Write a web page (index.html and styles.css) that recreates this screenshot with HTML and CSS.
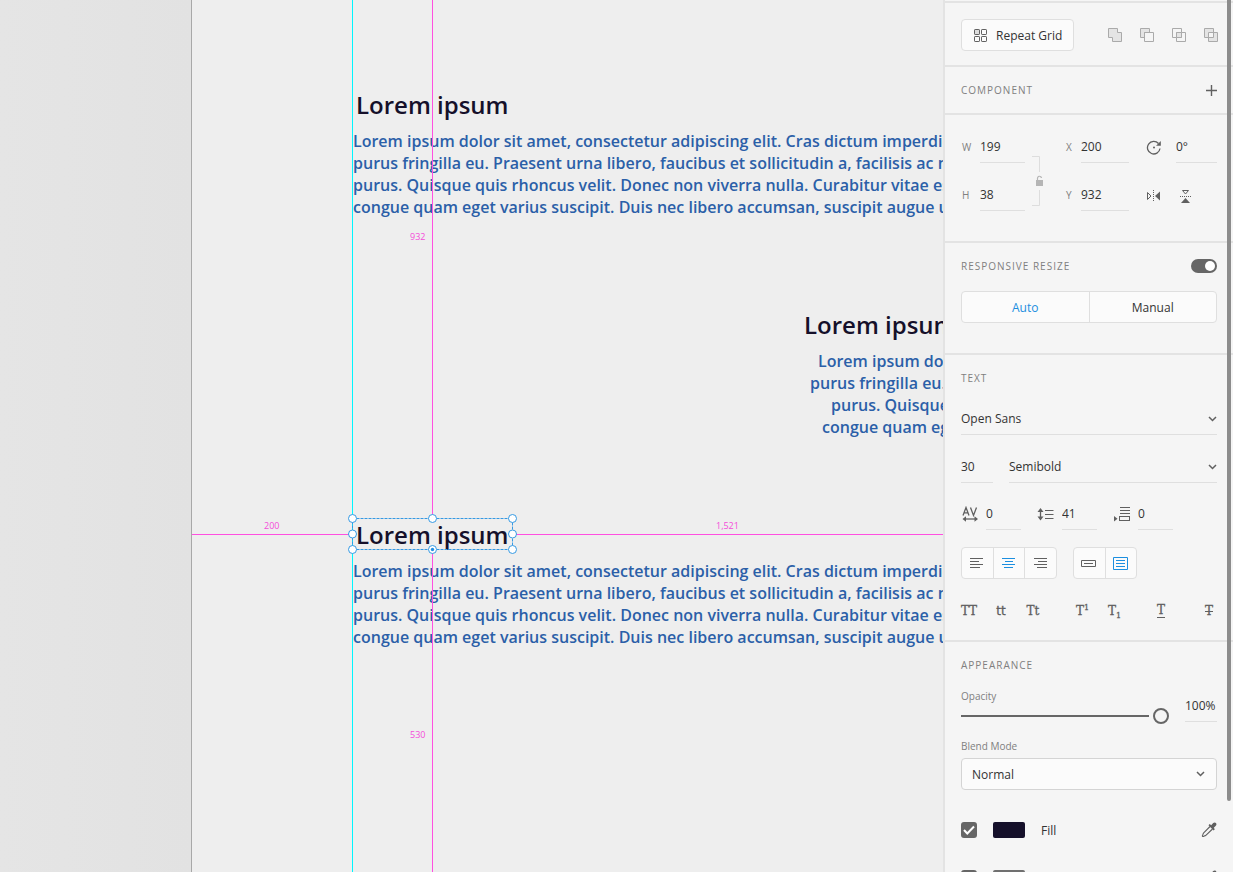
FILE: index.html
```html
<!DOCTYPE html>
<html lang="en">
<head>
<meta charset="utf-8">
<title>Design editor</title>
<link rel="stylesheet" href="styles.css">
</head>
<body class="app">
<main class="canvas">
  <div class="pasteboard"></div>
  <div class="artboard">
    <section class="copy copy-top">
      <h2 class="copy-title">Lorem ipsum</h2>
      <p class="copy-text">Lorem ipsum dolor sit amet, consectetur adipiscing elit. Cras dictum imperdiet<br>purus fringilla eu. Praesent urna libero, faucibus et sollicitudin a, facilisis ac nisi<br>purus. Quisque quis rhoncus velit. Donec non viverra nulla. Curabitur vitae est<br>congue quam eget varius suscipit. Duis nec libero accumsan, suscipit augue ut</p>
    </section>
    <section class="copy copy-middle">
      <h2 class="copy-title">Lorem ipsum</h2>
      <p class="copy-text"><span class="line line-1">Lorem ipsum dolor sit amet</span><span class="line">purus fringilla eu. Praesent urna</span><span class="line line-3">purus. Quisque quis rhoncus</span><span class="line line-4">congue quam eget varius</span></p>
    </section>
    <section class="copy copy-bottom">
      <h2 class="copy-title">Lorem ipsum</h2>
      <p class="copy-text">Lorem ipsum dolor sit amet, consectetur adipiscing elit. Cras dictum imperdiet<br>purus fringilla eu. Praesent urna libero, faucibus et sollicitudin a, facilisis ac nisi<br>purus. Quisque quis rhoncus velit. Donec non viverra nulla. Curabitur vitae est<br>congue quam eget varius suscipit. Duis nec libero accumsan, suscipit augue ut</p>
    </section>
    <div class="guide"></div>
    <div class="measure measure-up"></div>
    <div class="measure measure-down"></div>
    <div class="measure measure-left"></div>
    <div class="measure measure-right"></div>
    <span class="distance distance-up">932</span>
    <span class="distance distance-down">530</span>
    <span class="distance distance-left">200</span>
    <span class="distance distance-right">1,521</span>
    <svg class="selection" width="170" height="42" viewBox="0 0 170 42" aria-hidden="true">
      <rect class="selection-box" x="5.500" y="5.500" width="160" height="31"/>
      <g class="handle">
        <circle cx="5.500" cy="5.500" r="4"/><circle cx="85.500" cy="5.500" r="4"/><circle cx="165.500" cy="5.500" r="4"/>
        <circle cx="5.500" cy="21" r="4"/><circle cx="165.500" cy="21" r="4"/>
        <circle cx="5.500" cy="36.500" r="4"/><circle cx="85.500" cy="36.500" r="4"/><circle cx="165.500" cy="36.500" r="4"/>
      </g>
      <circle class="handle-dot" cx="85.500" cy="36.500" r="1.700"/>
    </svg>
  </div>
</main>

<aside class="panel">
  <div class="panel-top"></div>
  <section class="section toolbar">
    <button class="button repeat" type="button">
      <svg width="13" height="13" viewBox="0 0 13 13" aria-hidden="true"><g class="stroke"><rect x=".5" y=".5" width="5" height="5" rx=".6"/><rect x="7.500" y=".5" width="5" height="5" rx=".6"/><rect x=".5" y="7.500" width="5" height="5" rx=".6"/><rect x="7.500" y="7.500" width="5" height="5" rx=".6"/></g><path d="M1 1h4v4H1z" fill="#ddd"/></svg>
      Repeat Grid
    </button>
    <div class="booleans">
      <button class="icon-button" type="button" aria-label="Add"><svg width="14" height="14" viewBox="0 0 14 14"><path class="bool shade" d="M.5.5h9v4h4v9h-9v-4h-4z"/></svg></button>
      <button class="icon-button" type="button" aria-label="Subtract"><svg width="14" height="14" viewBox="0 0 14 14"><path class="bool shade" d="M.5.5h9v4h-5v5h-4z"/><path class="bool" d="M4.500 4.500h9v9h-9z"/></svg></button>
      <button class="icon-button" type="button" aria-label="Intersect"><svg width="14" height="14" viewBox="0 0 14 14"><path class="bool" d="M.5.5h9v9h-9zM4.500 4.500h9v9h-9z"/><path class="bool shade" d="M4.500 4.500h5v5h-5z"/></svg></button>
      <button class="icon-button" type="button" aria-label="Exclude overlap"><svg width="14" height="14" viewBox="0 0 14 14"><path class="bool shade" fill-rule="evenodd" d="M.5.5h9v9h-9zM4.500 4.500h9v9h-9z"/></svg></button>
    </div>
  </section>

  <section class="section section-line">
    <h3 class="caption">Component</h3>
    <button class="icon-button" type="button" aria-label="Add component"><svg width="11" height="11" viewBox="0 0 11 11"><path class="stroke" stroke-width="1.400" d="M5.500 0v11M0 5.500h11"/></svg></button>
  </section>

  <section class="section transform">
    <div class="pair">
      <label class="field"><span class="field-label">W</span><input class="input" value="199"></label>
      <label class="field"><span class="field-label">H</span><input class="input" value="38"></label>
    </div>
    <button class="icon-button link" type="button" aria-label="Lock aspect ratio"><svg width="12" height="50" viewBox="0 0 12 50"><path d="M0 .5h7.500V16M7.500 34v15.500H0" fill="none" stroke="#ddd"/><path d="M4 24h7v6H4z" fill="#b5b5b5"/><path d="M5.500 24v-1.500a2 2 0 0 1 4-.5" fill="none" stroke="#b5b5b5" stroke-width="1.200"/></svg></button>
    <div class="pair">
      <label class="field"><span class="field-label">X</span><input class="input" value="200"></label>
      <label class="field"><span class="field-label">Y</span><input class="input" value="932"></label>
    </div>
    <div class="pair rotate-column">
      <label class="field field-rotate"><svg width="16" height="16" viewBox="0 0 16 16" role="img" aria-label="Rotation"><path class="stroke" stroke-width="1.300" d="M15 9.500A6.300 6.300 0 1 1 13.500 4.500"/><path class="solid" d="M15.800 2v4.700h-4.700z"/><circle class="solid" cx="9" cy="8.500" r="1"/></svg><input class="input" value="0°"></label>
      <div class="flips">
        <button class="icon-button" type="button" aria-label="Flip horizontally"><svg width="16" height="16" viewBox="0 0 16 16"><path class="stroke" d="M2.500 5.500v7L6 9z"/><path class="solid" d="M15 4.500v9L10 9z"/><path class="stroke" stroke-dasharray="1 1" d="M8.500 3v12"/></svg></button>
        <button class="icon-button" type="button" aria-label="Flip vertically"><svg width="16" height="16" viewBox="0 0 16 16"><path class="stroke" d="M5.500 3.500h6L8.500 7z"/><path class="solid" d="M4 16h9l-4.500-5z"/><path class="stroke" stroke-dasharray="1 1" d="M3 9.500h12"/></svg></button>
      </div>
    </div>
  </section>

  <section class="section">
    <div class="heading-row">
      <h3 class="caption" id="resize-title">Responsive Resize</h3>
      <input class="toggle" type="checkbox" checked aria-labelledby="resize-title">
    </div>
    <div class="segments resize-mode">
      <button class="segment active" type="button">Auto</button>
      <button class="segment" type="button">Manual</button>
    </div>
  </section>

  <section class="section text-section">
    <h3 class="caption">Text</h3>
    <div class="select-wrap font-family">
      <select class="input select" aria-label="Font family"><option>Open Sans</option></select>
      <svg class="chevron" width="9" height="6" viewBox="0 0 9 6" aria-hidden="true"><path d="M1 1l3.500 3.500L8 1"/></svg>
    </div>
    <div class="font-row">
      <input class="input" value="30" aria-label="Font size">
      <div class="select-wrap">
        <select class="input select" aria-label="Font weight"><option>Semibold</option></select>
        <svg class="chevron" width="9" height="6" viewBox="0 0 9 6" aria-hidden="true"><path d="M1 1l3.500 3.500L8 1"/></svg>
      </div>
    </div>
    <div class="spacing-row">
      <label class="spacing"><svg width="18" height="16" viewBox="0 0 18 16" role="img" aria-label="Character spacing"><path class="stroke" stroke-width="1.300" d="M2 9.500l3-8 3 8M3.200 6.800h3.800M9.500 1.500l3 8 3-8"/><path class="stroke" stroke-width="1.300" d="M3 13h13"/><path class="solid" d="M5 10.300v5.400L1.500 13zM13.500 10.300v5.400l3.500-2.700z"/></svg><input class="input" value="0"></label>
      <label class="spacing"><svg width="18" height="16" viewBox="0 0 18 16" role="img" aria-label="Line spacing"><path class="stroke" stroke-width="1.300" d="M3.500 4v9"/><path class="solid" d="M.5 6l3-4 3 4zM.5 10.500h6l-3 4z"/><path class="stroke" d="M8 4.500h8.500M8 8.500h8.500M8 12.500h8.500"/></svg><input class="input" value="41"></label>
      <label class="spacing"><svg width="18" height="16" viewBox="0 0 18 16" role="img" aria-label="Paragraph spacing"><path class="stroke" d="M7 1.500h10M7 4.500h10M7 7.500h10"/><rect class="stroke" x="6.500" y="10.500" width="10" height="4"/><path class="solid" d="M1 10v5.500l3.500-2.700z"/></svg><input class="input" value="0"></label>
    </div>
    <div class="align-row">
      <div class="segments three">
        <button class="segment" type="button" aria-label="Align left"><svg width="14" height="14" viewBox="0 0 14 14"><path d="M0 1.500h13M0 4.500h9M0 7.500h13M0 10.500h10"/></svg></button>
        <button class="segment active" type="button" aria-label="Align center"><svg width="14" height="14" viewBox="0 0 14 14"><path d="M0 1.500h13M3 4.500h8M0 7.500h13M2 10.500h9"/></svg></button>
        <button class="segment" type="button" aria-label="Align right"><svg width="14" height="14" viewBox="0 0 14 14"><path d="M0 1.500h13M4 4.500h9M0 7.500h13M3 10.500h10"/></svg></button>
      </div>
      <div class="segments two">
        <button class="segment" type="button" aria-label="Point text"><svg width="16" height="16" viewBox="0 0 16 16"><path d="M.5 4.500h14v6H.5zM3 7.500h9"/></svg></button>
        <button class="segment active" type="button" aria-label="Area text"><svg width="16" height="16" viewBox="0 0 16 16"><path d="M.5 1.500h14v12H.5zM3 4.500h9M3 7.500h9M3 10.500h9"/></svg></button>
      </div>
    </div>
    <div class="style-row">
      <div class="style-group">
        <button class="glyph" type="button" aria-label="Uppercase">TT</button>
        <button class="glyph glyph-lower" type="button" aria-label="Lowercase">tt</button>
        <button class="glyph" type="button" aria-label="Title case">Tt</button>
      </div>
      <div class="style-group">
        <button class="glyph glyph-script" type="button" aria-label="Superscript">T<span class="script sup">1</span></button>
        <button class="glyph glyph-script" type="button" aria-label="Subscript">T<span class="script sub">1</span></button>
      </div>
      <button class="glyph" type="button" aria-label="Underline"><span class="underlined">T</span></button>
      <button class="glyph" type="button" aria-label="Strikethrough"><span class="struck">T</span></button>
    </div>
  </section>

  <section class="section appearance">
    <h3 class="caption">Appearance</h3>
    <div class="opacity-row">
      <div class="stack">
        <label class="small-label" for="opacity">Opacity</label>
        <input class="slider" id="opacity" type="range" min="0" max="100" value="100">
      </div>
      <input class="input" value="100%" aria-label="Opacity value">
    </div>
    <div class="stack blend">
      <label class="small-label" for="blend">Blend Mode</label>
      <div class="select-wrap">
        <select class="select boxed" id="blend"><option>Normal</option></select>
        <svg class="chevron chevron-inset" width="9" height="6" viewBox="0 0 9 6" aria-hidden="true"><path d="M1 1l3.500 3.500L8 1"/></svg>
      </div>
    </div>
    <div class="paint">
      <span class="check-wrap"><input class="check" id="fill" type="checkbox" checked><svg class="tick" width="12" height="10" viewBox="0 0 12 10" aria-hidden="true"><path d="M1 5l3.300 3.500L11 1.500"/></svg></span>
      <button class="swatch swatch-fill" type="button" aria-label="Fill color"></button>
      <label class="paint-label" for="fill">Fill</label>
      <button class="icon-button" type="button" aria-label="Pick fill color"><svg width="16" height="16" viewBox="0 0 16 16"><path class="stroke" stroke-width="1.100" d="M9 4.500L2.700 10.800c-.7.7-.6 1.300-.9 2-.3.600-.8 1-.3 1.500s1 .1 1.600-.2c.7-.3 1.300-.2 2-.9L11.500 7"/><path class="solid" d="M7.500 3.300l1.200-1.200 1.500 1.200 2-2.200c2-1.800 4.400.6 2.600 2.600l-2 2 1 1.600-1.200 1.200z"/></svg></button>
    </div>
    <div class="paint">
      <span class="check-wrap"><input class="check" id="border" type="checkbox" checked><svg class="tick" width="12" height="10" viewBox="0 0 12 10" aria-hidden="true"><path d="M1 5l3.300 3.500L11 1.500"/></svg></span>
      <button class="swatch swatch-border" type="button" aria-label="Border color"></button>
      <label class="paint-label" for="border">Border</label>
      <button class="icon-button" type="button" aria-label="Pick border color"><svg width="16" height="16" viewBox="0 0 16 16"><path class="stroke" stroke-width="1.100" d="M9 4.500L2.700 10.800c-.7.7-.6 1.300-.9 2-.3.600-.8 1-.3 1.500s1 .1 1.600-.2c.7-.3 1.300-.2 2-.9L11.500 7"/><path class="solid" d="M7.500 3.300l1.200-1.200 1.500 1.200 2-2.200c2-1.800 4.400.6 2.600 2.600l-2 2 1 1.600-1.200 1.200z"/></svg></button>
    </div>
  </section>
  <div class="scrollbar"></div>
</aside>
</body>
</html>
```

FILE: styles.css
```css
* { box-sizing: border-box; }

.app {
  margin: 0;
  height: 100vh;
  display: flex;
  overflow: hidden;
  background: #eee;
  color: #333;
  font: 12px/16px "Open Sans", "Noto Sans", sans-serif;
}

button, input, select { font: inherit; color: inherit; margin: 0; }
button { padding: 0; border: 0; background: none; }
svg { display: block; flex: none; }
h2, h3, p { margin: 0; }

/* Canvas */
.canvas { flex: 1; min-width: 0; display: flex; }
.pasteboard {
  width: 191px;
  background: linear-gradient(90deg, #e5e5e5, #e2e2e2);
}
.artboard {
  position: relative;
  flex: 1;
  min-width: 0;
  overflow: hidden;
  border-left: 1px solid #a8a8a8;
  background: #eee;
}
.copy { position: absolute; white-space: nowrap; font-family: "Open Sans", sans-serif; }
.copy-top { left: 161px; top: 89px; }
.copy-middle { left: 609px; top: 309px; }
.copy-bottom { left: 161px; top: 519px; }
.copy-title {
  padding-left: 3px;
  color: #15102a;
  font-size: 24px;
  line-height: 32px;
  font-weight: 600;
}
.copy-text {
  padding-top: 9px;
  color: #2b5fa8;
  font-size: 16px;
  line-height: 22px;
  font-weight: 600;
}
.copy-middle .copy-text { padding-left: 9px; }
.line { display: block; }
.line-1 { padding-left: 8px; }
.line-3 { padding-left: 21px; }
.line-4 { padding-left: 12px; }

.guide { position: absolute; left: 160px; top: 0; bottom: 0; width: 1px; background: #00f6ff; }
.measure { position: absolute; background: #ff4fe0; }
.measure-up { left: 240px; top: 0; width: 1px; height: 518px; }
.measure-down { left: 240px; top: 550px; width: 1px; bottom: 0; }
.measure-left { left: 0; top: 534px; width: 160px; height: 1px; }
.measure-right { left: 321px; top: 534px; right: 0; height: 1px; }
.distance {
  position: absolute;
  color: #f54cda;
  font-size: 9px;
  line-height: 12px;
}
.distance-up { left: 218px; top: 231px; }
.distance-down { left: 218px; top: 729px; }
.distance-left { left: 72px; top: 520px; }
.distance-right { left: 524px; top: 520px; }
.selection { position: absolute; left: 155px; top: 513px; }
.selection-box { fill: none; stroke: #3599e3; stroke-dasharray: 3 1; }
.handle { fill: #fff; stroke: #3599e3; }
.handle-dot { fill: #2390e3; }

/* Properties panel */
.panel {
  position: relative;
  flex: none;
  width: 290px;
  overflow: hidden;
  border-left: 2px solid #e3e3e3;
  background: #f5f5f5;
}
.panel-top { height: 3px; border-bottom: 2px solid #e3e3e3; }
.section { padding: 15px 16px 30px; border-bottom: 2px solid #e3e3e3; }
.scrollbar {
  position: absolute;
  top: 0;
  right: 2px;
  width: 4px;
  height: 801px;
  border-radius: 0 0 2px 2px;
  background: #8c8c8c;
}

.caption {
  color: #808080;
  font-size: 10px;
  line-height: 16px;
  font-weight: 400;
  letter-spacing: 1px;
  text-transform: uppercase;
}
.icon-button { display: block; flex: none; }
.stroke { fill: none; stroke: #606060; }
.solid { fill: #606060; }
.bool { fill: none; stroke: #aaa; }
.shade { fill: #e4e4e4; }

.toolbar {
  display: flex;
  align-items: center;
  justify-content: space-between;
  padding: 16px 15px 14px 16px;
}
.button {
  border: 1px solid #dfdfdf;
  border-radius: 4px;
  background: #fbfbfb;
}
.repeat {
  display: flex;
  align-items: center;
  gap: 9px;
  height: 32px;
  padding: 1px 11px 0 12px;
}
.booleans { display: flex; gap: 18px; }

.section-line, .heading-row {
  display: flex;
  align-items: center;
  justify-content: space-between;
}
.section-line { padding-bottom: 15px; }

.input {
  display: block;
  width: 100%;
  min-width: 0;
  height: 32px;
  padding: 0;
  border: 0;
  border-bottom: 1px solid #dfdfdf;
  border-radius: 0;
  background: none;
  outline: 0;
}
.transform {
  display: grid;
  grid-template-columns: 64px 40px 64px 1fr;
  padding-top: 16px;
}
.pair { display: grid; grid-auto-rows: 32px; gap: 16px; }
.field { display: flex; align-items: center; }
.field-label {
  flex: none;
  width: 16px;
  padding-left: 1px;
  color: #808080;
  font-size: 10px;
}
.pair:first-child .field-label { width: 19px; }
.link { align-self: end; padding: 0 0 5px 7px; }
.rotate-column { padding-left: 16px; }
.field-rotate { gap: 15px; }
.flips { display: flex; align-items: center; gap: 16px; }

.toggle {
  appearance: none;
  display: flex;
  justify-content: flex-end;
  width: 26px;
  height: 14px;
  padding: 2px;
  border-radius: 7px;
  background: #666;
}
.toggle::before { content: ""; width: 10px; height: 10px; border-radius: 5px; background: #fff; }

.segments {
  display: flex;
  height: 32px;
  border: 1px solid #dfdfdf;
  border-radius: 4px;
  background: #fbfbfb;
}
.resize-mode { margin-top: 17px; }
.segment { display: grid; place-items: center; flex: 1; padding-top: 1px; }
.segment + .segment { border-left: 1px solid #dfdfdf; }
.segment svg { fill: none; stroke: #606060; }
.segment.active { color: #1c8fe0; }
.segment.active svg { stroke: #1c8fe0; }
.three { width: 96px; }
.two { width: 64px; }

.select-wrap { display: grid; align-items: center; }
.select-wrap > * { grid-area: 1 / 1; }
.select { appearance: none; outline: 0; }
.chevron {
  justify-self: end;
  pointer-events: none;
  fill: none;
  stroke: #606060;
  stroke-width: 1.500;
}
.chevron-inset { margin-right: 12px; }
.boxed {
  width: 100%;
  height: 32px;
  padding: 1px 10px 0;
  border: 1px solid #d4d4d4;
  border-radius: 4px;
  background: #fbfbfb;
}

.text-section { padding-bottom: 14px; }
.font-family { margin-top: 17px; }
.font-row { display: grid; grid-template-columns: 32px 1fr; gap: 16px; margin-top: 16px; }
.spacing-row { display: flex; gap: 16px; margin-top: 15px; }
.spacing { display: flex; align-items: center; gap: 7px; width: 60px; }
.align-row { display: flex; gap: 16px; margin-top: 17px; }
.style-row { display: flex; justify-content: space-between; margin-top: 15px; }
.style-group { display: flex; gap: 16px; }
.glyph {
  display: flex;
  align-items: center;
  justify-content: center;
  width: 16px;
  height: 32px;
  padding-top: 2px;
  color: #606060;
  font-family: "DejaVu Serif", serif;
  font-size: 12px;
  -webkit-text-stroke: 0.3px #606060;
}
.glyph-lower { font-family: "DejaVu Sans", sans-serif; }
.glyph-script { padding-left: 3px; }
.script { font-size: 8px; line-height: 8px; }
.sup { align-self: flex-start; padding-top: 8px; }
.sub { align-self: flex-end; padding-bottom: 6px; }
.underlined { line-height: 13px; border-bottom: 1px solid #606060; }
.struck { text-decoration: line-through; }

.appearance { border-bottom: 0; }
.opacity-row { display: grid; grid-template-columns: 208px 32px; gap: 16px; margin-top: 17px; }
.stack { display: grid; gap: 6px; }
.small-label { color: #808080; font-size: 10px; line-height: 12px; }
.slider {
  appearance: none;
  width: 100%;
  height: 16px;
  margin: 0;
  background: linear-gradient(#666, #666) 0 7px / 188px 2px no-repeat;
}
.slider::-webkit-slider-thumb {
  appearance: none;
  width: 16px;
  height: 16px;
  border: 2px solid #666;
  border-radius: 8px;
  background: #f5f5f5;
}
.blend { margin-top: 16px; }
.paint { display: flex; align-items: center; gap: 16px; height: 16px; margin-top: 32px; }
.check-wrap { display: grid; place-items: center; }
.check-wrap > * { grid-area: 1 / 1; }
.check {
  appearance: none;
  width: 16px;
  height: 16px;
  border-radius: 3px;
  background: #666;
}
.tick { pointer-events: none; fill: none; stroke: #fff; stroke-width: 2; }
.swatch { width: 32px; height: 16px; border-radius: 2px; }
.swatch-fill { background: #15102a; }
.swatch-border { background: #707070; }
.paint-label { flex: 1; padding-top: 1px; }
```
